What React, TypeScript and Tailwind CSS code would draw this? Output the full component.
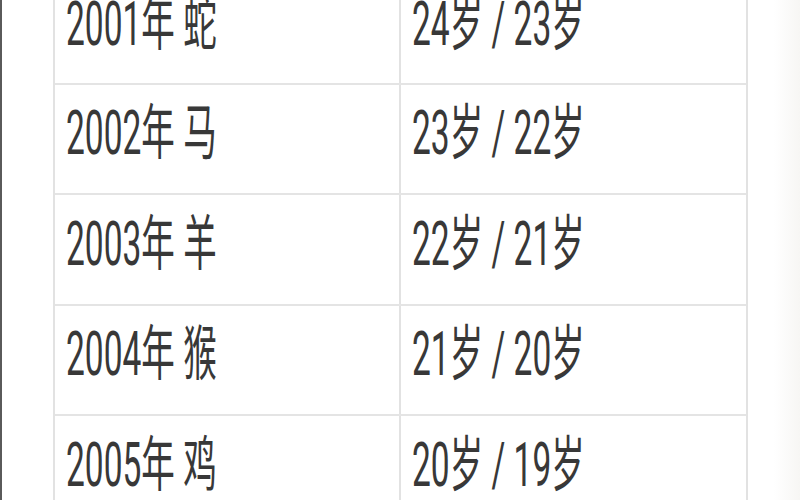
const rows = [
  { year: "2001年", animal: "蛇", age: "24岁", age2: "23岁" },
  { year: "2002年", animal: "马", age: "23岁", age2: "22岁" },
  { year: "2003年", animal: "羊", age: "22岁", age2: "21岁" },
  { year: "2004年", animal: "猴", age: "21岁", age2: "20岁" },
  { year: "2005年", animal: "鸡", age: "20岁", age2: "19岁" },
]

const Cell = ({ children, first }: { children: React.ReactNode; first?: boolean }) => (
  <div className={"flex items-center pl-[11px] pb-[10px] " + (first ? "border-r-2 border-[#e2e2e2]" : "")}>
    <span className="inline-block scale-y-[1.8] whitespace-pre text-[33.5px] font-normal leading-none text-[#383838]">
      {children}
    </span>
  </div>
)

const App = () => {
  return (
    <div
      className="w-[800px] h-[500px] overflow-hidden bg-white flex"
      style={{ fontFamily: 'Roboto, "Noto Sans CJK SC", sans-serif' }}
    >
      <div className="w-[2px] bg-[#5a5a5a]" />
      <div className="w-[51px] bg-white" />
      <div className="w-[695px] -mt-[24px] border-x-2 border-[#e2e2e2] bg-white">
        {rows.map((r, i) => (
          <div
            key={r.year}
            className={"grid grid-cols-[346px_1fr] border-b-2 border-[#e4e4e4] box-border " + (i === 0 ? "h-[108.5px]" : "h-[110.5px]")}
          >
            <Cell first>{r.year} {r.animal}</Cell>
            <Cell>{r.age} / {r.age2}</Cell>
          </div>
        ))}
      </div>
      <div className="flex-1 bg-gradient-to-r from-white via-white to-[#f7f6f4]" />
    </div>
  )
}

export default App
